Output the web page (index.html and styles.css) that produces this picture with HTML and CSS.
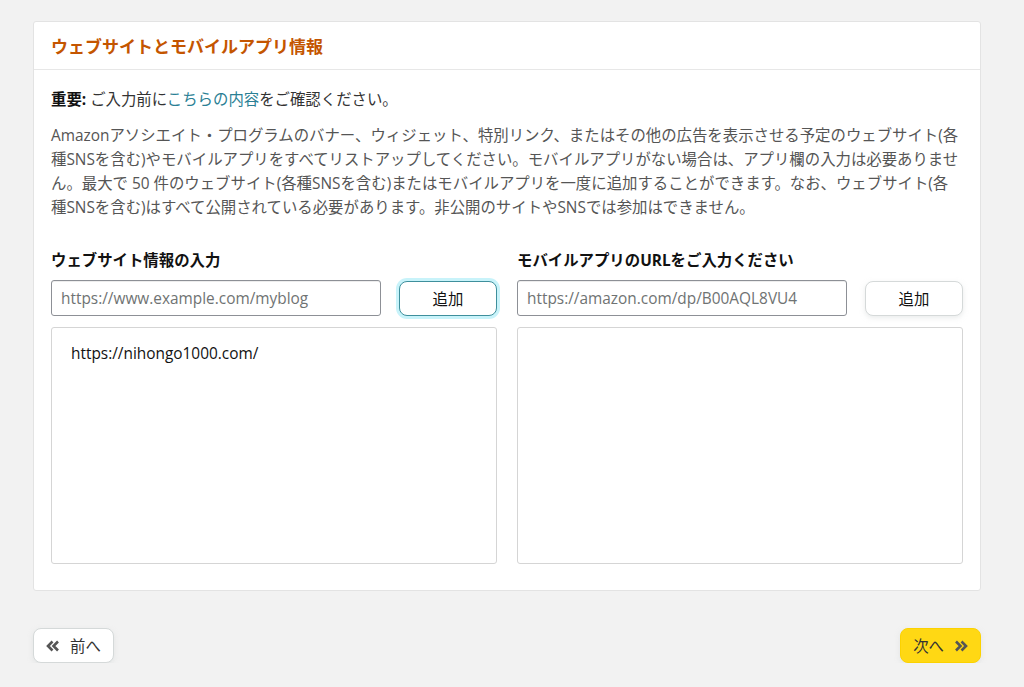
FILE: index.html
```html
<!DOCTYPE html>
<html lang="ja">
<head>
<meta charset="utf-8">
<title>ウェブサイトとモバイルアプリ情報</title>
<link rel="stylesheet" href="styles.css">
</head>
<body>
<div class="page">
  <section class="card">
    <header class="card-head">
      <h1 class="card-title">ウェブサイトとモバイルアプリ情報</h1>
    </header>
    <div class="card-body">
      <p class="notice"><b>重要:</b> ご入力前に<a class="link" href="#">こちらの内容</a>をご確認ください。</p>
      <p class="desc">Amazonアソシエイト・プログラムのバナー、ウィジェット、特別リンク、またはその他の広告を表示させる予定のウェブサイト(各種SNSを含む)やモバイルアプリをすべてリストアップしてください。モバイルアプリがない場合は、アプリ欄の入力は必要ありません。最大で 50 件のウェブサイト(各種SNSを含む)またはモバイルアプリを一度に追加することができます。なお、ウェブサイト(各種SNSを含む)はすべて公開されている必要があります。非公開のサイトやSNSでは参加はできません。</p>
      <div class="cols">
        <div class="col">
          <div class="label">ウェブサイト情報の入力</div>
          <div class="row">
            <input class="field" type="text" placeholder="https://www.example.com/myblog">
            <button class="btn btn-add btn-focus">追加</button>
          </div>
          <div class="list">
            <div class="list-item">https://nihongo1000.com/</div>
          </div>
        </div>
        <div class="col">
          <div class="label">モバイルアプリのURLをご入力ください</div>
          <div class="row">
            <input class="field" type="text" placeholder="https://amazon.com/dp/B00AQL8VU4">
            <button class="btn btn-add">追加</button>
          </div>
          <div class="list"></div>
        </div>
      </div>
    </div>
  </section>
  <nav class="footer">
    <button class="btn btn-nav">
      <svg class="chev" width="14" height="12" viewBox="0 0 14 12"><path d="M6.5 1.5 2 6l4.5 4.5M12 1.5 7.5 6l4.5 4.5" fill="none" stroke="#555" stroke-width="2.6"/></svg>
      <span>前へ</span>
    </button>
    <button class="btn btn-nav btn-primary">
      <span>次へ</span>
      <svg class="chev" width="14" height="12" viewBox="0 0 14 12"><path d="M2 1.5 6.5 6 2 10.5M7.5 1.5 12 6l-4.5 4.5" fill="none" stroke="#555" stroke-width="2.6"/></svg>
    </button>
  </nav>
</div>
</body>
</html>
```
FILE: styles.css
```css
* { box-sizing: border-box; }
html, body { margin: 0; padding: 0; }
body {
  background: #f2f2f2;
  font-family: "Open Sans", "Noto Sans CJK JP", sans-serif;
  font-size: 15.4px;
  color: #111;
}
.page {
  padding: 21px 43px 0 33px;
}
.card {
  background: #fff;
  border: 1px solid #e3e3e3;
  border-radius: 3px;
}
.card-head {
  height: 48px;
  display: flex;
  align-items: center;
  padding: 0 17px;
  border-bottom: 1px solid #e7e7e7;
}
.card-title {
  margin: 0;
  font-size: 17px;
  font-weight: bold;
  color: #c45500;
}
.card-body {
  padding: 18px 17px 26px;
}
.notice {
  margin: 0;
  line-height: 24px;
  color: #333;
}
.notice b { color: #111; }
.link { color: #2a7f95; text-decoration: none; }
.desc {
  margin: 12px 0 0;
  line-height: 24px;
  color: #555;
}
.cols {
  display: grid;
  grid-template-columns: 1fr 1fr;
  gap: 20px;
  margin-top: 29px;
}
.label {
  font-weight: bold;
  line-height: 24px;
  color: #111;
}
.row {
  display: flex;
  justify-content: space-between;
  align-items: center;
  margin-top: 7px;
}
.field {
  width: 330px;
  height: 36px;
  border: 1px solid #8d9096;
  border-radius: 3px;
  padding: 0 9px;
  font: inherit;
  color: #111;
  background: #fff;
  box-shadow: 0 1px 0 rgba(0,0,0,.07) inset;
}
.field::placeholder { color: #6f7373; }
.btn {
  font: inherit;
  color: #111;
  background: #fff;
  border: 1px solid #d5d9d9;
  border-radius: 8px;
  box-shadow: 0 2px 5px rgba(213,217,217,.5);
  cursor: pointer;
}
.btn-add {
  width: 98px;
  height: 35px;
}
.btn-focus {
  border-color: #3e8f9c;
  box-shadow: 0 0 0 3px #c8f3fa;
}
.list {
  margin-top: 11px;
  height: 237px;
  border: 1px solid #d5d5d5;
  border-radius: 3px;
  padding: 14px 19px;
}
.list-item {
  line-height: 24px;
  color: #111;
}
.footer {
  display: flex;
  justify-content: space-between;
  margin-top: 37px;
}
.btn-nav {
  height: 35px;
  display: flex;
  align-items: center;
  gap: 10px;
  padding: 0 12px;
  color: #333;
}
.btn-primary {
  background: #ffd814;
  border-color: #fcd200;
}
.chev { display: block; }
```
